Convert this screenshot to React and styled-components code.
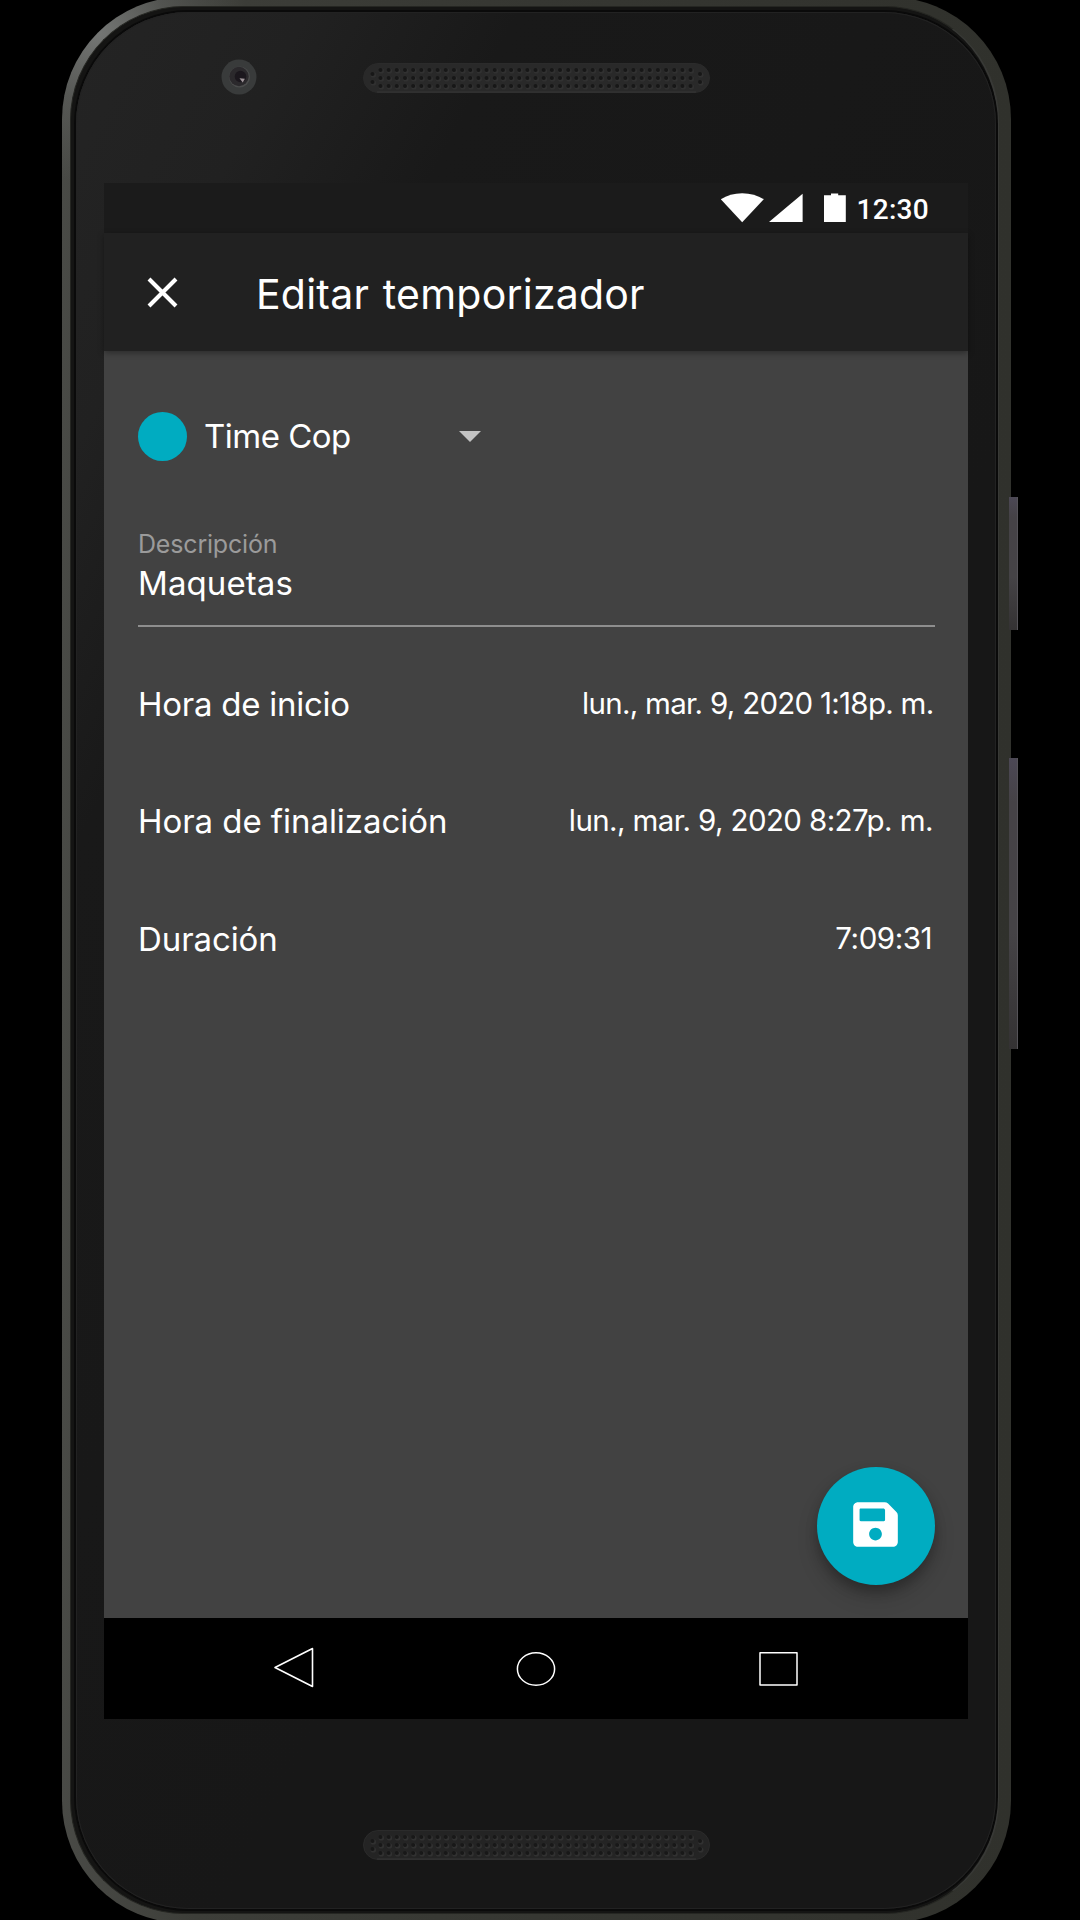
import React from "react";
import styled, { createGlobalStyle } from "styled-components";
import { FaSave } from "react-icons/fa";

const GlobalStyle = createGlobalStyle`
  *, *::before, *::after { box-sizing: border-box; }
  html, body { margin: 0; background: #000; overflow: hidden; }
`;

const Stage = styled.main`
  width: 1080px;
  height: 1920px;
  display: flex;
  justify-content: center;
  align-items: center;
  padding-right: 7px;
  background: #000;
  overflow: hidden;
  font-family: Inter, "Liberation Sans", sans-serif;
  color: #fff;
`;

const Metal = styled.div`
  position: relative;
  flex: none;
  width: 949px;
  height: 1926px;
  padding: 9px 12px 9px 8px;
  border-radius: 122px;
  background:
    radial-gradient(circle at 36px 36px, #747674 0, rgba(100, 102, 100, 0.5) 70px, transparent 150px),
    linear-gradient(90deg, #494a46 0, #3d3e39 14%, #363732 50%, #30312c 100%);
`;

const Rim = styled.div`
  height: 100%;
  padding: 5px 1px 4px 5px;
  border-radius: 114px;
  background: #141413;
  border: 1px solid #252622;
  border-right: 2px solid #383936;
`;

const Glass = styled.div`
  height: 100%;
  display: flex;
  flex-direction: column;
  align-items: center;
  border-radius: 112px;
  background: linear-gradient(118deg, #242424 0, #212121 12%, #191919 23%, #171717 60%, #171717 100%);
  box-shadow: inset 0 0 0 1px #222, 0 0 0 2px #0a0a0a;
`;

const SideKey = styled.div`
  position: absolute;
  left: 947px;
  top: ${(p) => p.$top}px;
  width: 9px;
  height: ${(p) => p.$height}px;
  border-right: 1px solid #555358;
  background: linear-gradient(180deg, #4c4855 0, #454246 15%, #454346 60%, #343233 100%);
`;

const TopBezel = styled.div`
  width: 100%;
  height: 171px;
  flex: none;
  display: flex;
  align-items: flex-start;
  padding: 47px 0 0 145px;
  gap: 106px;
`;

const BottomBezel = styled.div`
  width: 100%;
  flex: 1;
  padding: 111px 0 0 287px;
`;

const GrilleSvg = styled.svg`
  display: block;
  flex: none;
  margin-top: ${(p) => p.$offset || 0}px;
`;

const Screen = styled.section`
  width: 864px;
  height: 1536px;
  flex: none;
  display: flex;
  flex-direction: column;
  background: #424242;
`;

const StatusBar = styled.div`
  height: 50px;
  flex: none;
  display: flex;
  align-items: center;
  justify-content: flex-end;
  padding-right: 39px;
  background: #1b1b1b;
`;

const Clock = styled.time`
  margin: 4px 0 0 10px;
  font: 500 28px/32px Roboto, sans-serif;
  letter-spacing: 0.3px;
`;

const AppBar = styled.header`
  height: 118px;
  flex: none;
  display: flex;
  align-items: center;
  padding-left: 43px;
  background: #212121;
  box-shadow: 0 2px 6px rgba(0, 0, 0, 0.35);
`;

const IconButton = styled.button`
  display: flex;
  padding: 0;
  border: 0;
  color: inherit;
  background: none;
`;

const Title = styled.h1`
  margin: 3px 0 0 78px;
  font-size: 41px;
  line-height: 50px;
  font-weight: 400;
  letter-spacing: ${(p) => p.$track}px;
  word-spacing: 2px;
  white-space: nowrap;
`;

const Form = styled.form`
  flex: 1;
  display: flex;
  flex-direction: column;
  padding: 60px 33px 33px 34px;
`;

const Project = styled.div`
  display: flex;
  align-items: center;
  width: 343px;
  height: 50px;
`;

const Swatch = styled.span`
  width: 49px;
  height: 49px;
  flex: none;
  border-radius: 50%;
  background: #00acc1;
  margin-right: 17px;
`;

const Label = styled.span`
  font-size: 33px;
  line-height: 40px;
  letter-spacing: ${(p) => p.$track || 0}px;
  white-space: nowrap;
`;

const Caret = styled.svg`
  display: block;
  margin: 0 0 0 auto;
`;

const Field = styled.label`
  display: flex;
  flex-direction: column;
  margin-top: 67px;
  height: 99px;
  border-bottom: 2px solid #8e8e8e;
`;

const Hint = styled.span`
  font-size: 25px;
  line-height: 32px;
  letter-spacing: ${(p) => p.$track}px;
  color: #9b9b9b;
  margin-bottom: 3px;
`;

const Row = styled.div`
  height: 117.5px;
  display: flex;
  justify-content: space-between;
  align-items: center;
`;

const Rows = styled.div`
  padding-top: 18px;
`;

const Value = styled.span`
  font-size: 29.5px;
  line-height: 36px;
  letter-spacing: ${(p) => p.$track || 0}px;
  margin: -2px ${(p) => p.$end || 0}px 0 0;
  white-space: nowrap;
`;

const SaveButton = styled.button`
  width: 118px;
  height: 118px;
  margin: auto 0 0 auto;
  display: flex;
  align-items: center;
  justify-content: center;
  padding: 0 1px 3px 0;
  border: 0;
  border-radius: 50%;
  color: #fff;
  background: #00acc1;
  box-shadow: 0 7px 12px rgba(0, 0, 0, 0.24), 0 12px 22px rgba(0, 0, 0, 0.14);
`;

const NavBar = styled.nav`
  height: 101px;
  flex: none;
  display: flex;
  align-items: center;
  padding: 0 168px;
  justify-content: space-between;
  background: #000;
`;

function Grille({ offset, dot, fill }) {
  const dots = [];
  for (let c = 0; c < 39; c++) {
    for (let r = 0; r < 3; r++) dots.push([17.5 + c * 8.16, 7 + r * 8]);
  }
  [9.5, 337].forEach((x) => dots.push([x, 11], [x, 19]));
  return (
    <GrilleSvg $offset={offset} width="347" height="30" viewBox="0 0 347 30">
      <rect x="0.5" y="0.5" width="346" height="29" rx="14.5" fill={fill} stroke="#2b2b2b" />
      <path d="M14 29H333" stroke="#373737" />
      {dots.map(([x, y], i) => (
        <g key={i}>
          <circle cx={x + 0.8} cy={y + 0.9} r="2.7" fill="#313131" />
          <circle cx={x} cy={y} r="2" fill={dot} />
        </g>
      ))}
    </GrilleSvg>
  );
}

function Camera() {
  return (
    <GrilleSvg width="36" height="36" viewBox="0 0 36 36">
      <circle cx="18" cy="18" r="17.5" fill="#393b3b" />
      <circle cx="18.5" cy="18" r="10.5" fill="#4b4c4c" />
      <circle cx="18" cy="17.5" r="9.7" fill="#2b292c" />
      <circle cx="19.5" cy="17.5" r="5.8" fill="#1b171d" />
      <path d="M18.5 19.3l5.4 0.4-2.2 3.8z" fill="#a0969a" />
    </GrilleSvg>
  );
}

export default function App() {
  return (
    <Stage>
      <GlobalStyle />
      <Metal>
        <SideKey $top={500} $height={133} />
        <SideKey $top={761} $height={291} />
        <Rim>
          <Glass>
            <TopBezel>
              <Camera />
              <Grille offset={4} dot="#171717" fill="#292929" />
            </TopBezel>
            <Screen>
              <StatusBar>
                <svg width="126" height="30" viewBox="0 0 126 30" fill="#fff">
                  <path d="M0.8 6.2Q10 0.2 22.2 0.2T43.8 6.2L22.2 29.2z" />
                  <path d="M82.6 0.8V29H49z" />
                  <path d="M104 2.2h7V0.4h7.2V2.2h7.6V29H104z" />
                </svg>
                <Clock>12:30</Clock>
              </StatusBar>
              <AppBar>
                <IconButton type="button" aria-label="Cerrar">
                  <svg width="31" height="31" viewBox="0 0 31 31" stroke="#fff" strokeWidth="4.1">
                    <path d="M2 2L29 29M29 2L2 29" />
                  </svg>
                </IconButton>
                <Title $track={0.22}>Editar temporizador</Title>
              </AppBar>
              <Form>
                <Project>
                  <Swatch />
                  <Label $track={-0.5}>Time Cop</Label>
                  <Caret width="22" height="11" viewBox="0 0 22 11">
                    <path d="M0 0H22L11 11z" fill="#c2c2c2" />
                  </Caret>
                </Project>
                <Field>
                  <Hint $track={-0.18}>Descripción</Hint>
                  <Label $track={0.1}>Maquetas</Label>
                </Field>
                <Rows>
                  <Row>
                    <Label $track={-0.26}>Hora de inicio</Label>
                    <Value $track={-0.72} $end={1.5}>lun., mar. 9, 2020 1:18p. m.</Value>
                  </Row>
                  <Row>
                    <Label $track={-0.05}>Hora de finalización</Label>
                    <Value $track={-0.6} $end={2.2}>lun., mar. 9, 2020 8:27p. m.</Value>
                  </Row>
                  <Row>
                    <Label $track={-0.1}>Duración</Label>
                    <Value $track={-0.45} $end={3}>7:09:31</Value>
                  </Row>
                </Rows>
                <SaveButton type="button" aria-label="Guardar">
                  <FaSave size={51} />
                </SaveButton>
              </Form>
              <NavBar>
                <svg width="44" height="44" viewBox="0 0 44 44" fill="none" stroke="#fff" strokeWidth="1.6" strokeLinejoin="round">
                  <path d="M3 20.5L40.5 1.5V39.5z" />
                </svg>
                <svg width="44" height="44" viewBox="0 0 44 44" fill="none" stroke="#fff" strokeWidth="1.5">
                  <ellipse cx="22" cy="22" rx="18.6" ry="16.2" />
                </svg>
                <svg width="44" height="44" viewBox="0 0 44 44" fill="none" stroke="#fff" strokeWidth="1.5" strokeLinejoin="round">
                  <rect x="4" y="5.7" width="37" height="32.4" />
                </svg>
              </NavBar>
            </Screen>
            <BottomBezel>
              <Grille dot="#181818" fill="#242424" />
            </BottomBezel>
          </Glass>
        </Rim>
      </Metal>
    </Stage>
  );
}
